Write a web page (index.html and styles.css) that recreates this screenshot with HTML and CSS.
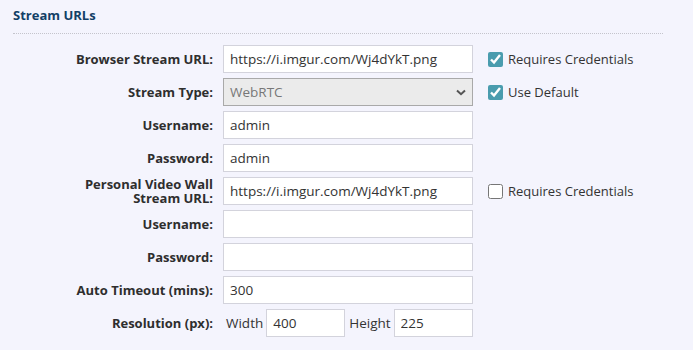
FILE: index.html
```html
<!DOCTYPE html>
<html lang="en">
<head>
    <meta charset="UTF-8">
    <title>Stream URLs</title>
    <link rel="stylesheet" href="styles.css">
</head>
<body>
    <section class="stream-urls">
        <h3 class="section-title">Stream URLs</h3>

        <div class="form-grid">
            <label class="field-label" for="browserUrl">Browser Stream URL:</label>
            <input class="text-input" type="text" id="browserUrl" value="https://i.imgur.com/Wj4dYkT.png">
            <label class="check"><input type="checkbox" checked> Requires Credentials</label>

            <label class="field-label" for="streamType">Stream Type:</label>
            <div class="select-box" id="streamType">
                <span>WebRTC</span>
                <svg width="10" height="7" viewBox="0 0 10 7"><path d="M1 1.5 L5 5.2 L9 1.5" fill="none" stroke="#555" stroke-width="2"/></svg>
            </div>
            <label class="check"><input type="checkbox" checked> Use Default</label>

            <label class="field-label" for="user1">Username:</label>
            <input class="text-input" type="text" id="user1" value="admin">
            <span></span>

            <label class="field-label" for="pass1">Password:</label>
            <input class="text-input" type="text" id="pass1" value="admin">
            <span></span>

            <label class="field-label two-line" for="wallUrl">Personal Video Wall<br>Stream URL:</label>
            <input class="text-input" type="text" id="wallUrl" value="https://i.imgur.com/Wj4dYkT.png">
            <label class="check"><input type="checkbox"> Requires Credentials</label>

            <label class="field-label" for="user2">Username:</label>
            <input class="text-input" type="text" id="user2" value="">
            <span></span>

            <label class="field-label" for="pass2">Password:</label>
            <input class="text-input" type="password" id="pass2" value="">
            <span></span>

            <label class="field-label" for="timeout">Auto Timeout (mins):</label>
            <input class="text-input" type="text" id="timeout" value="300">
            <span></span>

            <label class="field-label">Resolution (px):</label>
            <div class="resolution">
                <span class="res-word">Width</span>
                <input class="text-input small" type="text" value="400">
                <span class="res-word">Height</span>
                <input class="text-input small" type="text" value="225">
            </div>
            <span></span>
        </div>
    </section>
</body>
</html>
```

FILE: styles.css
```css
body {
    margin: 0;
    padding: 0;
    background-color: #f4f4fd;
    font-family: "Open Sans", "Noto Sans", Arial, sans-serif;
    color: #333333;
}

.stream-urls {
    padding: 6px 30px 0 13px;
}

.section-title {
    margin: 0;
    padding-bottom: 9px;
    font-size: 13px;
    font-weight: 700;
    color: #123f66;
    border-bottom: 1px dotted #c4c4cc;
}

.form-grid {
    display: grid;
    grid-template-columns: 200px 250px auto;
    grid-auto-rows: 28px;
    column-gap: 10px;
    row-gap: 5px;
    margin-top: 11px;
    align-items: center;
}

.field-label {
    text-align: right;
    font-size: 13px;
    font-weight: 700;
    color: #2e2e2e;
}

.field-label.two-line {
    line-height: 14px;
}

.text-input {
    box-sizing: border-box;
    width: 250px;
    height: 28px;
    margin: 0;
    padding: 0 6px;
    border: 1px solid #d3d3dc;
    background-color: #ffffff;
    font-family: inherit;
    font-size: 13.5px;
    color: #333333;
    outline: none;
}

.select-box {
    box-sizing: border-box;
    height: 28px;
    display: flex;
    align-items: center;
    justify-content: space-between;
    padding: 0 6px;
    border: 1px solid #a9a9a9;
    background-color: #ebebeb;
    font-size: 13.5px;
    color: #777777;
}

.check {
    display: flex;
    align-items: center;
    gap: 5px;
    margin-left: 5px;
    font-size: 13px;
    color: #333333;
}

.check input {
    width: 15px;
    height: 15px;
    margin: 0;
    accent-color: #4a9cae;
}

.resolution {
    display: flex;
    align-items: center;
    font-size: 13.5px;
    color: #333333;
    padding-left: 3px;
}

.res-word {
    margin-right: 3px;
}

.resolution .text-input.small {
    width: 79px;
    padding: 0 6px;
    margin-right: 4px;
}

.resolution .text-input.small:last-child {
    margin-right: 0;
}
```
